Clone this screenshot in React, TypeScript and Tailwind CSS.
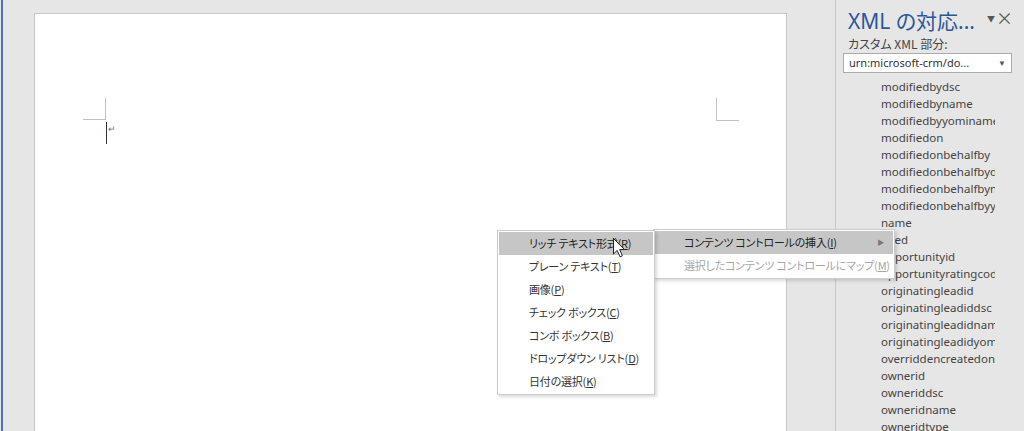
const fields = [
  "modifiedbydsc",
  "modifiedbyname",
  "modifiedbyyominame",
  "modifiedon",
  "modifiedonbehalfby",
  "modifiedonbehalfbydsc",
  "modifiedonbehalfbyname",
  "modifiedonbehalfbyyominame",
  "name",
  "need",
  "opportunityid",
  "opportunityratingcode",
  "originatingleadid",
  "originatingleadiddsc",
  "originatingleadidname",
  "originatingleadidyominame",
  "overriddencreatedon",
  "ownerid",
  "owneriddsc",
  "owneridname",
  "owneridtype",
];

const controls: [string, string][] = [
  ["リッチ テキスト形式", "R"],
  ["プレーン テキスト", "T"],
  ["画像", "P"],
  ["チェック ボックス", "C"],
  ["コンボ ボックス", "B"],
  ["ドロップダウン リスト", "D"],
  ["日付の選択", "K"],
];

export default function App() {
  return (
    <div className="relative flex h-[431px] w-[1024px] overflow-hidden bg-[#e6e6e6] font-['Noto_Sans_CJK_JP',sans-serif] [font-feature-settings:'palt']">
      {/* Document area */}
      <div className="flex w-[835px] shrink-0">
        <div className="ml-px w-[2px] bg-[#4a74bd]" />
        <div className="relative ml-[31px] mt-[13px] w-[753px] border-x border-t border-[#c8c8c8] bg-white">
          {/* margin corners */}
          <div className="absolute left-[48px] top-[84px] h-[22px] w-[23px] border-b border-r border-[#c0c0c0]" />
          <div className="absolute left-[681px] top-[84px] h-[23px] w-[23px] border-b border-l border-[#c0c0c0]" />
          {/* caret + paragraph mark */}
          <div className="absolute left-[71px] top-[108px] h-[22px] w-px bg-[#333]" />
          <span className="absolute left-[73px] top-[110px] text-[9px] leading-none text-[#777]">↵</span>
        </div>
      </div>

      <div className="w-px shrink-0 bg-[#c8c8c8]" />

      {/* Task pane */}
      <div className="relative w-[188px] shrink-0">
        <div className="pl-[12px] pt-[7px] font-['Noto_Sans','Noto_Sans_CJK_JP',sans-serif] text-[21px] leading-[28px] text-[#2b579a]">
          XML の対応...
        </div>
        <div className="absolute right-[29px] top-[15px] text-[8px] leading-none text-[#555]">▼</div>
        <div className="absolute right-[11px] top-[9px] text-[17px] leading-none text-[#555]">×</div>
        <div className="pl-[12px] pt-[1px] text-[12px] leading-[16px] text-[#444]">カスタム XML 部分:</div>
        <div className="ml-[7px] mt-[1px] flex h-[20px] w-[169px] items-center justify-between border border-[#ababab] bg-white pl-[5px] pr-[5px] font-['Noto_Sans',sans-serif] text-[11px] text-[#333]">
          <span>urn:microsoft-crm/do...</span>
          <span className="text-[8px] text-[#555]">▼</span>
        </div>
        <div className="mt-[5px] w-[159px] overflow-hidden pl-[45px] font-['Noto_Sans',sans-serif] text-[11.5px] leading-[17px] text-[#444]">
          {fields.map((f) => (
            <div key={f} className="whitespace-nowrap">
              {f}
            </div>
          ))}
        </div>
      </div>

      {/* Context menu */}
      <div className="absolute left-[653px] top-[229px] w-[242px] border border-[#cccccc] bg-white p-[1px] text-[11px] tracking-[-0.2px] shadow-[2px_2px_3px_rgba(0,0,0,0.15)]">
        <div className="flex h-[23px] items-center justify-between whitespace-nowrap bg-[#c6c6c6] pl-[29px] pr-[9px] text-[#222]">
          <span>
            コンテンツ コントロールの挿入(<u>I</u>)
          </span>
          <span className="text-[7px] text-[#777]">▶</span>
        </div>
        <div className="flex h-[23px] items-center whitespace-nowrap pl-[29px] text-[#a6a6a6]">
          <span>
            選択したコンテンツ コントロールにマップ(<u>M</u>)
          </span>
        </div>
      </div>

      {/* Submenu */}
      <div className="absolute left-[497px] top-[230px] w-[158px] border border-[#cccccc] bg-white p-[1px] text-[11px] tracking-[-0.2px] text-[#333] shadow-[2px_2px_3px_rgba(0,0,0,0.15)]">
        {controls.map(([label, key], i) => (
          <div
            key={key}
            className={`flex h-[23px] items-center whitespace-nowrap pl-[30px] ${i === 0 ? "bg-[#c6c6c6] text-[#222]" : ""}`}
          >
            <span>
              {label}(<u>{key}</u>)
            </span>
          </div>
        ))}
      </div>

      {/* Mouse pointer */}
      <svg className="absolute left-[612px] top-[237px]" width="14" height="22" viewBox="0 0 14 22">
        <path
          d="M1.5 1.5 L1.5 17 L5.2 13.4 L8 19.8 L10.4 18.8 L7.7 12.6 L12.5 12.6 Z"
          fill="#fff"
          stroke="#222"
          strokeWidth="1"
          strokeLinejoin="round"
        />
      </svg>
    </div>
  );
}
